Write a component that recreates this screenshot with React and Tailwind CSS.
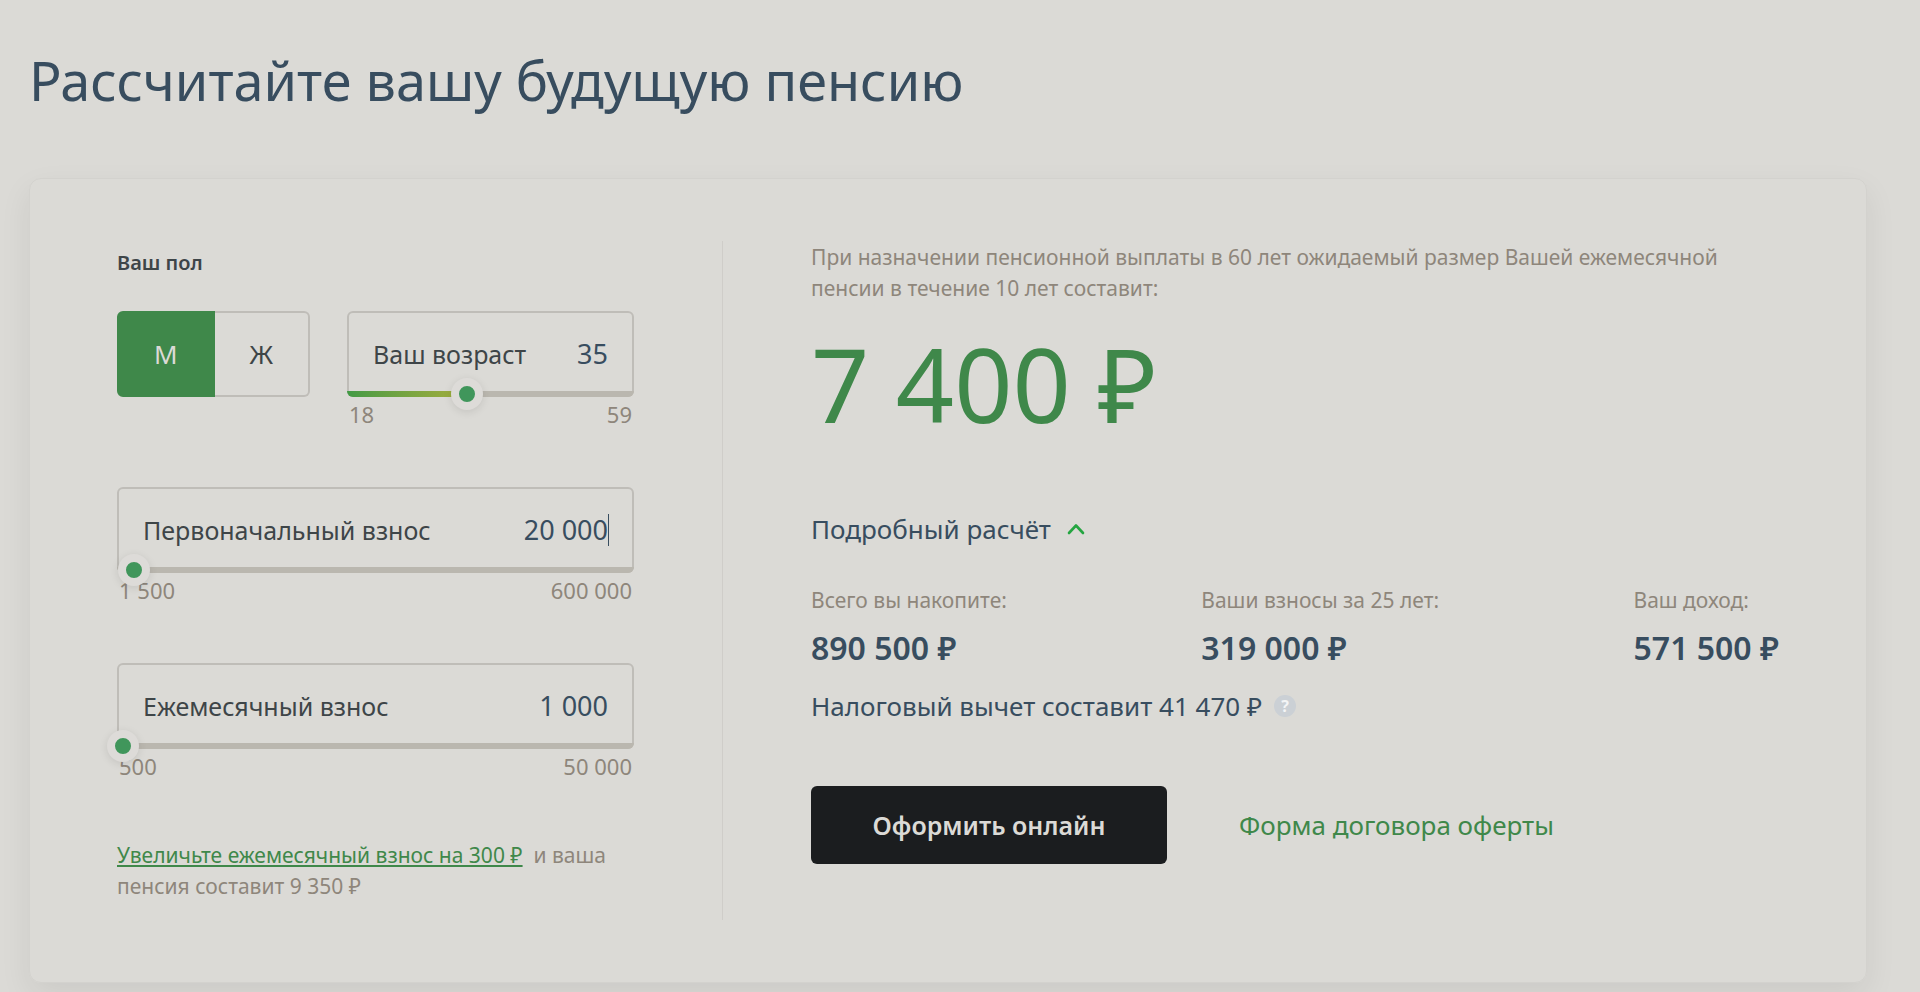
import { useState } from 'react'
import clsx from 'clsx'

const genders = [
  { value: 'm', label: 'М' },
  { value: 'f', label: 'Ж' },
]

const totals = [
  { label: 'Всего вы накопите:', value: '890 500 ₽' },
  { label: 'Ваши взносы за 25 лет:', value: '319 000 ₽' },
  { label: 'Ваш доход:', value: '571 500 ₽' },
]

const formatNumber = (n) => String(n).replace(/\B(?=(\d{3})+$)/g, '\u00a0')

function GenderSwitch({ value, onChange }) {
  return (
    <div role="group" aria-labelledby="gender-title" className="flex h-[86px] w-[193px] shrink-0">
      {genders.map((g) => (
        <button
          key={g.value}
          type="button"
          aria-pressed={value === g.value}
          onClick={() => onChange(g.value)}
          className={clsx(
            'flex-1 border-2 text-[26px] leading-8 first:rounded-l-md last:rounded-r-md',
            value === g.value
              ? 'border-[#3f884a] bg-[#3f884a] text-[#dbdad6]'
              : 'border-[#bfbdb8] text-[#3e4548] not-first:border-l-0 not-last:border-r-0'
          )}
        >
          {g.label}
        </button>
      ))}
    </div>
  )
}

function SliderField({ id, label, min, max, value, onChange, focused = false }) {
  const percent = ((value - min) / (max - min)) * 100

  const handleText = (e) => {
    const next = Number(e.target.value.replace(/\D/g, ''))
    onChange(Math.min(max, next))
  }

  return (
    <div className="min-w-0 flex-1">
      <div className="relative">
        <div className="flex h-[86px] items-center overflow-hidden rounded-md border-2 border-[#bfbdb8] px-6 leading-8">
          <label htmlFor={id} className="text-[25px] whitespace-nowrap text-[#3e4548]">{label}</label>
          <input
            id={id}
            type="text"
            inputMode="numeric"
            value={formatNumber(value)}
            onChange={handleText}
            className="w-0 min-w-0 flex-1 bg-transparent text-right text-[27px] text-[#384d5f] outline-none"
          />
          {focused && <span className="-mr-px h-8 w-px bg-[#384d5f]" />}
        </div>

        {/* Track */}
        <div className="absolute inset-x-0 bottom-0 h-[6px] overflow-hidden rounded-b-md bg-[#bab7af]">
          {percent > 5 && (
            <div className="h-full bg-linear-to-r from-[#419a45] to-[#a3ae3c]" style={{ width: `${percent}%` }} />
          )}
        </div>
        <input
          type="range"
          aria-label={label}
          min={min}
          max={max}
          value={value}
          onChange={(e) => onChange(Number(e.target.value))}
          className="absolute -right-4 -bottom-[13px] -left-[15px] h-8 cursor-pointer appearance-none bg-transparent outline-none [&::-webkit-slider-thumb]:size-8 [&::-webkit-slider-thumb]:appearance-none [&::-webkit-slider-thumb]:rounded-full [&::-webkit-slider-thumb]:border-8 [&::-webkit-slider-thumb]:border-[#dddbd8] [&::-webkit-slider-thumb]:bg-[#40965b] [&::-webkit-slider-thumb]:shadow-[0_2px_8px_rgba(0,0,0,0.1)]"
        />
      </div>
      <div className="flex justify-between px-0.5 pt-px text-[22px] leading-8 text-[#8e867b]">
        <span>{formatNumber(min)}</span>
        <span>{formatNumber(max)}</span>
      </div>
    </div>
  )
}

function CalculatorForm() {
  const [gender, setGender] = useState('m')
  const [age, setAge] = useState(35)
  const [initial, setInitial] = useState(20000)
  const [monthly, setMonthly] = useState(1000)

  const raiseMonthly = (e) => {
    e.preventDefault()
    setMonthly(monthly + 300)
  }

  return (
    <form className="w-[517px] shrink-0 pt-1.5 pb-[18px]">
      <h2 id="gender-title" className="text-[20px] leading-8 font-semibold text-[#3e4548]">Ваш пол</h2>

      <div className="mt-8 flex flex-col gap-[57px]">
        <div className="flex gap-[37px]">
          <GenderSwitch value={gender} onChange={setGender} />
          <SliderField id="age" label="Ваш возраст" min={18} max={59} value={age} onChange={setAge} />
        </div>
        <SliderField
          id="initial"
          label="Первоначальный взнос"
          min={1500}
          max={600000}
          value={initial}
          onChange={setInitial}
          focused
        />
        <SliderField id="monthly" label="Ежемесячный взнос" min={500} max={50000} value={monthly} onChange={setMonthly} />
      </div>

      <p className="mt-[58px] text-[21px] leading-[31px] text-[#8e867b]">
        <a href="#monthly" onClick={raiseMonthly} className="text-[#3f884a] underline decoration-2 underline-offset-2">
          Увеличьте ежемесячный взнос на 300 ₽
        </a>
        {' '}&nbsp;и ваша пенсия составит 9&nbsp;350&nbsp;₽
      </p>
    </form>
  )
}

function Result() {
  const [open, setOpen] = useState(true)

  return (
    <section className="min-w-0 flex-1 pt-px">
      <p className="text-[21px] leading-[31px] text-[#8e867b]">
        При назначении пенсионной выплаты в 60 лет ожидаемый размер Вашей ежемесячной
        пенсии в течение 10 лет составит:
      </p>
      <p className="mt-[30px] text-[102px] leading-[100px] text-[#3f884a]">7 400 ₽</p>

      <button
        type="button"
        aria-expanded={open}
        onClick={() => setOpen(!open)}
        className="mt-[77px] flex items-center gap-4 text-[26px] leading-9 text-[#384d5f]"
      >
        Подробный расчёт
        <svg viewBox="0 0 18 12" className={clsx('h-3 w-[18px]', !open && 'rotate-180')} fill="none" stroke="#25a541" strokeWidth="2.6" strokeLinecap="round" strokeLinejoin="round">
          <path d="M2 10 9 2.5 16 10" />
        </svg>
      </button>

      {open && (
        <>
          <dl className="mt-[37px] flex justify-between">
            {totals.map((t) => (
              <div key={t.label}>
                <dt className="text-[21px] leading-8 text-[#8e867b]">{t.label}</dt>
                <dd className="mt-3 text-[32px] leading-10 font-semibold text-[#384d5f]">{t.value}</dd>
              </div>
            ))}
          </dl>
          <p className="mt-5 flex items-center gap-3 text-[26px] leading-9 text-[#384d5f]">
            Налоговый вычет составит 41 470 ₽
            <button type="button" aria-label="Подсказка" className="flex size-[22px] items-center justify-center rounded-full bg-[#cbd0d5] text-[16px] leading-none font-bold text-[#f4f5f6]">
              ?
            </button>
          </p>
        </>
      )}

      <div className="mt-[62px] flex items-center gap-[72px]">
        <button type="button" className="h-[78px] w-[356px] rounded-md bg-[#1b1d1f] text-[25px] leading-8 font-semibold text-[#dbdad6]">
          Оформить онлайн
        </button>
        <a href="#offer" className="text-[26px] leading-8 text-[#3f884a]">Форма договора оферты</a>
      </div>
    </section>
  )
}

export default function App() {
  return (
    <main className="min-h-screen overflow-hidden bg-[#dbdad6] pt-11 pr-[53px] pl-[29px] font-['Noto_Sans','Open_Sans',sans-serif]">
      <h1 className="text-[54px] leading-[72px] text-[#384d5f]">Рассчитайте вашу будущую пенсию</h1>

      <div className="mt-[62px] mb-2 flex gap-[88px] rounded-xl border border-[#d3d2ce] px-[87px] py-[62px] shadow-[0_12px_32px_rgba(0,0,0,0.07)]">
        <CalculatorForm />
        <div className="w-px shrink-0 bg-[#cfcdc9]" />
        <Result />
      </div>
    </main>
  )
}
